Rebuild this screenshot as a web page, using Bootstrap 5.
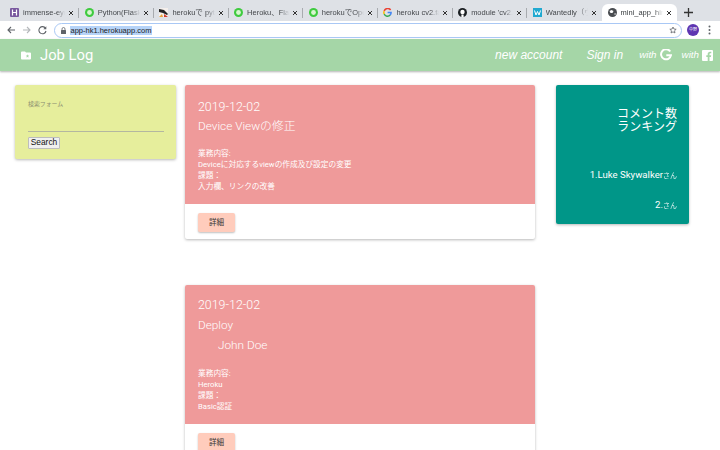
<!DOCTYPE html>
<html lang="ja"><head><meta charset="utf-8"><title>mini_app</title>
<link href="https://cdn.jsdelivr.net/npm/bootstrap@5.3.0/dist/css/bootstrap.min.css" rel="stylesheet">
<style>
html,body{height:450px;overflow:hidden}
body{font-family:Roboto,"Noto Sans CJK JP",sans-serif;background:#fff;color:#212121}
.tabbar{height:21px;background:#dee1e6;padding:4px 0 0 4.500px;font-family:"Liberation Sans","Noto Sans CJK JP",sans-serif}
.tabitem{width:74.700px;height:17px;padding:0 5px 0 5.500px;font-size:7.500px;color:#45484c;position:relative;flex:none}
.tabitem svg.fav{flex:none;margin-right:4px}
.tabitem .ttl{flex:1;overflow:hidden;white-space:nowrap;-webkit-mask-image:linear-gradient(90deg,#000 80%,transparent);mask-image:linear-gradient(90deg,#000 80%,transparent)}
.tabitem .cls{flex:none;margin:0 0 0 3px}
.tabitem.sep:after{content:"";position:absolute;right:0;top:4px;height:10px;width:1px;background:#a8abaf}
.tabitem.on{background:#fff;border-radius:6px 6px 0 0;color:#3c4043}
.plus{margin-left:7px;width:9px}
.toolbar{height:18px;background:#fff;padding:0 6px 0 3px}
.navicon{width:16px;flex:none}
.omni{height:15px;width:628px;margin:0 5px 0 3px;border:1px solid #a9c8f5;border-radius:8px;padding:0 4px 0 6px;font:7.500px "Liberation Sans",sans-serif;color:#202124;flex:none}
.hl{background:#b5d3f8;margin-left:4px;padding:0 .500px}
.avatar{width:12px;height:12px;border-radius:50%;background:#5e35b1;color:#fff;font-size:4px;margin-right:9px;flex:none}
.topnav{height:32px;background:#a5d6a7;box-shadow:0 1px 2px rgba(0,0,0,.3);padding:0 7px 0 21px;color:#fff}
.brandtxt{font-size:14.800px;margin-left:9px;line-height:1}
.lnkbig{font-size:12px;font-style:italic;font-family:"Liberation Sans",sans-serif}
.lnksm{font-size:9.800px;font-style:italic;font-family:"Liberation Sans",sans-serif;margin-right:3px}
.gapa{margin-left:16px}
.gapb{margin-left:10px}
.pagewrap{padding:14px 31px 0 15px;gap:9px}
.leftcol{width:161px;flex:none}
.maincol{width:350px;flex:none}
.rightcol{width:133px;flex:none;margin-left:12px}
.panelbox{border-radius:2px;box-shadow:0 1px 3px rgba(0,0,0,.28);overflow:hidden}
.srch{background:#e6ee9c;height:74px;padding:15px 12px 0 13px}
.srchlabel{font-size:5.900px;color:#8a8c70;line-height:9px}
.srchline{height:1px;background:#b4b7a0;margin-top:22px}
.srchbtn{font:8.400px "Liberation Sans",sans-serif;color:#111;background:#f0f0f0;border:1px solid #bdbdbd;border-radius:1px;height:11.500px;width:32px;padding:0;margin-top:5px;line-height:9px;display:block}
.job{background:#fff;margin-bottom:46px}
.jobtop{background:#ef9a9a;color:#fff;padding:13.500px 13px 0}
.jobtop.a{height:119px}
.jobtop.b{height:139px;padding-top:11.500px}
.jobdate{font-size:12.400px;line-height:16px;font-weight:300}
.jobttl{font-size:11.800px;line-height:16px;margin-top:3px;font-weight:300}
.jobtop.b .jobttl{margin-top:4px}
.jobuser{font-size:11.800px;line-height:16px;margin:4px 0 0 20px;font-weight:300}
.jobbody{font-size:7.700px;line-height:11px;margin-top:14px}
.jobtop.b .jobbody{margin-top:15px}
.jobfoot{padding:9px 13px 7px}
.detailbtn{display:block;width:37px;height:19px;background:#ffccbc;color:#333;border:0;border-radius:2px;font-size:7.600px;padding:0;box-shadow:0 1px 2px rgba(0,0,0,.25)}
.rank{background:#009688;color:#fff;height:139px;padding:23px 12px 0;text-align:right}
.rankhead{font-size:12px;line-height:13px}
.rankrow{font-size:9.600px;line-height:12px}
.rankone{margin-top:35px}
.ranktwo{margin-top:17px}
.rankrow small{font-size:7px;opacity:.85}
</style></head><body>
<div class="tabbar d-flex align-items-start">
 <div class="tabitem sep d-flex align-items-center"><svg class="fav" width="9" height="9"><rect width="9" height="9" rx="1" fill="#79589f"/><path d="M2.500 1.500v6M6.500 1.500v6M2.500 4.500h4" stroke="#fff" stroke-width="1.200"/></svg><span class="ttl">immense-eyrie</span><svg class="cls" width="6" height="6"><path d="M1 1l4 4M5 1L1 5" stroke="#333" stroke-width="1"/></svg></div>
 <div class="tabitem sep d-flex align-items-center"><svg class="fav" width="9" height="9"><circle cx="4.500" cy="4.500" r="4.500" fill="#3ecb3e"/><circle cx="4.500" cy="4.500" r="2.400" fill="#d8f5d0"/></svg><span class="ttl">Python(Flask)で</span><svg class="cls" width="6" height="6"><path d="M1 1l4 4M5 1L1 5" stroke="#333" stroke-width="1"/></svg></div>
 <div class="tabitem sep d-flex align-items-center"><svg class="fav" width="9" height="9"><rect width="9" height="9" fill="#f4efec"/><path d="M0 1l5 1 4 4-1 1-4-2-4-1z" fill="#222"/><path d="M5 6l4 3H5z" fill="#d23a2c"/><path d="M0 9l3-3 1 3z" fill="#e8a33a"/></svg><span class="ttl">herokuで pytho</span><svg class="cls" width="6" height="6"><path d="M1 1l4 4M5 1L1 5" stroke="#333" stroke-width="1"/></svg></div>
 <div class="tabitem sep d-flex align-items-center"><svg class="fav" width="9" height="9"><circle cx="4.500" cy="4.500" r="4.500" fill="#3ecb3e"/><circle cx="4.500" cy="4.500" r="2.400" fill="#d8f5d0"/></svg><span class="ttl">Heroku、Flask</span><svg class="cls" width="6" height="6"><path d="M1 1l4 4M5 1L1 5" stroke="#333" stroke-width="1"/></svg></div>
 <div class="tabitem sep d-flex align-items-center"><svg class="fav" width="9" height="9"><circle cx="4.500" cy="4.500" r="4.500" fill="#3ecb3e"/><circle cx="4.500" cy="4.500" r="2.400" fill="#d8f5d0"/></svg><span class="ttl">herokuでOpenC</span><svg class="cls" width="6" height="6"><path d="M1 1l4 4M5 1L1 5" stroke="#333" stroke-width="1"/></svg></div>
 <div class="tabitem sep d-flex align-items-center"><svg class="fav" width="9" height="9" viewBox="0 0 9 9"><path d="M7.600 2A3.600 3.600 0 0 0 1.200 3" fill="none" stroke="#ea4335" stroke-width="1.500"/><path d="M1.200 3a3.600 3.600 0 0 0 0 3" fill="none" stroke="#fbbc05" stroke-width="1.500"/><path d="M1.200 6a3.600 3.600 0 0 0 6 1" fill="none" stroke="#34a853" stroke-width="1.500"/><path d="M7.200 7a3.600 3.600 0 0 0 .9-2.600H4.600" fill="none" stroke="#4285f4" stroke-width="1.500"/></svg><span class="ttl">heroku cv2.face</span><svg class="cls" width="6" height="6"><path d="M1 1l4 4M5 1L1 5" stroke="#333" stroke-width="1"/></svg></div>
 <div class="tabitem sep d-flex align-items-center"><svg class="fav" width="9" height="9"><circle cx="4.500" cy="4.500" r="4.500" fill="#1b1f23"/><circle cx="4.500" cy="4" r="2.200" fill="#fff"/><path d="M3.400 9V6.500h2.200V9z" fill="#fff"/></svg><span class="ttl">module 'cv2.cv</span><svg class="cls" width="6" height="6"><path d="M1 1l4 4M5 1L1 5" stroke="#333" stroke-width="1"/></svg></div>
 <div class="tabitem d-flex align-items-center"><svg class="fav" width="9" height="9"><rect width="9" height="9" fill="#21a9d0"/><path d="M1.500 2.500l1.500 4.500 1.500-3.500L6 7l1.500-4.500" fill="none" stroke="#fff" stroke-width="1"/></svg><span class="ttl">Wantedly（ウォ</span><svg class="cls" width="6" height="6"><path d="M1 1l4 4M5 1L1 5" stroke="#333" stroke-width="1"/></svg></div>
 <div class="tabitem on d-flex align-items-center"><svg class="fav" width="9" height="9"><circle cx="4.500" cy="4.500" r="4.500" fill="#4a4d51"/><path d="M1.500 3l2-1 2 1-1 2-2 0zM6 6l1.500-1v2z" fill="#fff"/></svg><span class="ttl">mini_app_hirano</span><svg class="cls" width="6" height="6"><path d="M1 1l4 4M5 1L1 5" stroke="#333" stroke-width="1"/></svg></div>
 <svg class="plus mt-1" width="9" height="9"><path d="M4.500 0v9M0 4.500h9" stroke="#333" stroke-width="1.300"/></svg>
</div>
<div class="toolbar d-flex align-items-center">
 <svg class="navicon" width="16" height="10"><path d="M12 5H5M8 2L5 5l3 3" fill="none" stroke="#5f6368" stroke-width="1.100"/></svg>
 <svg class="navicon" width="16" height="10"><path d="M4 5h7M8 2l3 3-3 3" fill="none" stroke="#b4b7ba" stroke-width="1.100"/></svg>
 <svg class="navicon" width="16" height="10"><path d="M10.500 3.200A3.600 3.600 0 1 0 11 6" fill="none" stroke="#5f6368" stroke-width="1.100"/><path d="M11.300 1.200v3h-3z" fill="#5f6368"/></svg>
 <div class="omni d-flex align-items-center">
  <svg width="5" height="7"><rect y="3" width="5" height="4" rx=".5" fill="#5f6368"/><path d="M1 3.500V2a1.500 1.500 0 0 1 3 0v1.500" fill="none" stroke="#5f6368" stroke-width=".8"/></svg>
  <span class="hl">app-hk1.herokuapp.com</span>
  <svg class="ms-auto" width="8" height="8" viewBox="0 0 24 24"><path d="M12 3l2.800 6.100 6.700.7-5 4.500 1.400 6.600L12 17.500 6.100 20.900l1.400-6.600-5-4.500 6.700-.7z" fill="none" stroke="#5f6368" stroke-width="2.400"/></svg>
 </div>
 <div class="avatar d-flex align-items-center justify-content-center">中野</div>
 <svg width="3" height="10"><circle cx="1.500" cy="1.500" r="1" fill="#5f6368"/><circle cx="1.500" cy="5" r="1" fill="#5f6368"/><circle cx="1.500" cy="8.500" r="1" fill="#5f6368"/></svg>
</div>
<nav class="topnav d-flex align-items-center">
 <svg width="10" height="9" viewBox="0 0 10 9"><path d="M0 1.500A1 1 0 0 1 1 .5h3l1 1h4a1 1 0 0 1 1 1v5a1 1 0 0 1-1 1H1a1 1 0 0 1-1-1z" fill="#fff"/><path d="M6.500 3.200l.5 1.200 1.200.1-.9.8.3 1.200-1.100-.6-1.100.6.300-1.200-.9-.8 1.200-.1z" fill="#a5d6a7"/></svg>
 <span class="brandtxt">Job Log</span>
 <div class="ms-auto d-flex align-items-center">
  <span class="lnkbig">new account</span>
  <span class="lnkbig ms-4">Sign in</span>
  <span class="lnksm gapa">with</span>
  <svg width="12" height="12" viewBox="0 0 12 12"><path d="M10.200 2.500A5 5 0 1 0 11 6.200H6.300" fill="none" stroke="#fff" stroke-width="2"/></svg>
  <span class="lnksm gapb">with</span>
  <svg width="11" height="11" viewBox="0 0 11 11"><path fill-rule="evenodd" d="M1 0h9a1 1 0 0 1 1 1v9a1 1 0 0 1-1 1H7.500V7h1.400l.3-1.700H7.500V4.200c0-.6.300-.9.900-.9h.9V1.800H8c-1.400 0-2.300.9-2.300 2.300v1.200H4.300V7h1.400v4H1a1 1 0 0 1-1-1V1a1 1 0 0 1 1-1z" fill="#fff"/></svg>
 </div>
</nav>
<div class="pagewrap d-flex align-items-start">
 <div class="leftcol panelbox srch">
  <div class="srchlabel">検索フォーム</div>
  <div class="srchline"></div>
  <button class="srchbtn" type="button">Search</button>
 </div>
 <div class="maincol">
  <div class="job panelbox">
   <div class="jobtop a">
    <div class="jobdate">2019-12-02</div>
    <div class="jobttl">Device Viewの修正</div>
    <div class="jobbody">業務内容:<br>Deviceに対応するviewの作成及び設定の変更<br>課題：<br>入力欄、リンクの改善</div>
   </div>
   <div class="jobfoot"><button class="detailbtn" type="button">詳細</button></div>
  </div>
  <div class="job panelbox">
   <div class="jobtop b">
    <div class="jobdate">2019-12-02</div>
    <div class="jobttl">Deploy</div>
    <div class="jobuser">John Doe</div>
    <div class="jobbody">業務内容:<br>Heroku<br>課題：<br>Basic認証</div>
   </div>
   <div class="jobfoot"><button class="detailbtn" type="button">詳細</button></div>
  </div>
 </div>
 <div class="rightcol panelbox rank">
  <div class="rankhead">コメント数<br>ランキング</div>
  <div class="rankrow rankone">1.Luke Skywalker<small>さん</small></div>
  <div class="rankrow ranktwo">2.<small>さん</small></div>
 </div>
</div>
</body></html>
